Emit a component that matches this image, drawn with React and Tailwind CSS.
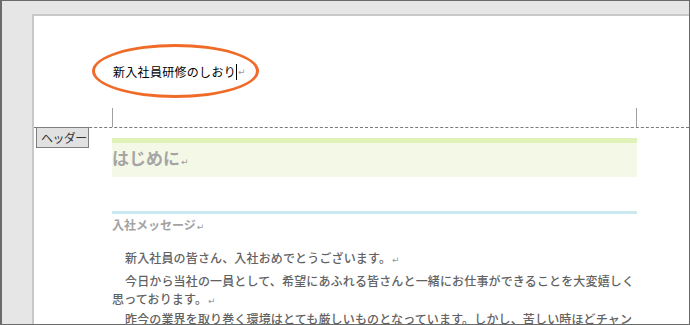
import React from 'react'

const jp = { fontFamily: '"Noto Sans CJK JP", "Noto Sans", sans-serif' }

function Mark() {
  return <span className="text-[#9a9a9a] text-[9px] ml-[1px] font-normal" style={{ fontFamily: '"DejaVu Sans", sans-serif' }}>↵</span>
}

export default function App() {
  return (
    <div className="w-[690px] h-[325px] overflow-hidden bg-[#e6e6e6] border-t border-r border-b border-l-2 border-[#6b6b6b] pt-[13px] pl-[30px]" style={jp}>
      <div className="relative h-[330px] bg-white border-t-2 border-l-2 border-[#c8c8c8]">
        {/* header area */}
        <div className="flex flex-col h-[111px] pl-[79px] pt-[48px]">
          <div className="relative self-start flex items-center text-[12px] leading-[16px] text-black tracking-[0.3px]">
            新入社員研修のしおり
            <span className="inline-block w-[1px] h-[16px] bg-black"></span>
            <Mark />
            {/* orange annotation ellipse */}
            <div className="absolute -left-[21px] -top-[20px] w-[167px] h-[54px] rounded-[50%] border-[3px] border-[#f06a28]"></div>
          </div>
          <div className="mt-auto -ml-[1px] w-[525px] h-[19px] border-l border-r border-[#a0a0a0]"></div>
        </div>
        <div className="border-t border-dashed border-[#7a7a7a]"></div>
        <div className="absolute left-[2px] top-[111px] w-[53px] h-[21px] bg-[#e1e1e1] border border-[#7f7f7f] text-[12px] leading-[19px] text-[#333] pl-[4px] whitespace-nowrap tracking-[-0.6px]">
          ヘッダー
        </div>

        {/* body */}
        <div className="ml-[78px] w-[525px] pt-[10px]">
          <div className="border-t-[5px] border-[#e0f2b8] bg-[#f4f9e7] h-[39px] pt-[3px]">
            <div className="text-[17px] leading-[24px] font-bold text-[#a5a5a5]">
              はじめに<Mark />
            </div>
          </div>
          <div className="mt-[34px] border-t-[3px] border-[#c9e8f0]"></div>
          <div className="mt-[3px] text-[12px] leading-[16px] font-bold text-[#a3a3a3]">
            入社メッセージ<Mark />
          </div>
          <div className="mt-[14px] text-[12px] leading-[18px] text-[#626262] font-medium tracking-[0.15px]">
            <p className="indent-[13px] mb-[3px]">新入社員の皆さん、入社おめでとうございます。<Mark /></p>
            <p className="indent-[13px]">今日から当社の一員として、希望にあふれる皆さんと一緒にお仕事ができることを大変嬉しく思っております。<Mark /></p>
            <p className="indent-[13px]">昨今の業界を取り巻く環境はとても厳しいものとなっています。しかし、苦しい時ほどチャンスがあるものです。<Mark /></p>
          </div>
        </div>
      </div>
    </div>
  )
}
